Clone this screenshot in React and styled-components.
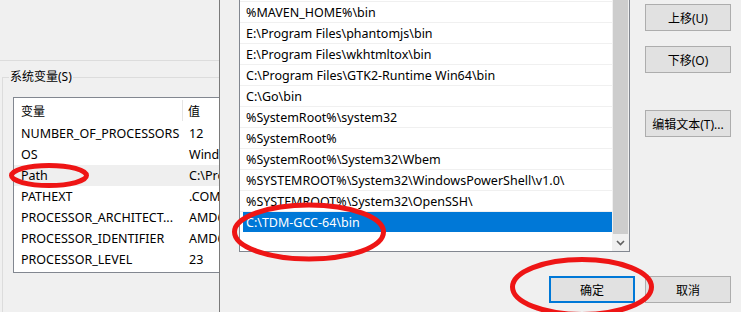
import styled, { createGlobalStyle } from 'styled-components';

const GlobalStyle = createGlobalStyle`
    body {
        margin: 0;
        background: #f0f0f0;
        font-family: "Noto Sans", "Noto Sans CJK SC", sans-serif;
        font-size: 12px;
        color: #000;
    }
`;

const Screen = styled.div`
    position: relative;
    width: 741px;
    height: 312px;
    overflow: hidden;
    display: flex;
    background: #f0f0f0;
`;

/* --- window behind --- */

const BackWindow = styled.div`
    width: 219px;
    flex: none;
    overflow: hidden;
`;

const TopArea = styled.div`
    height: 60px;
    border-bottom: 1px solid #dcdcdc;
`;

const GroupBox = styled.fieldset`
    margin: 8px 0 0 2px;
    padding: 0 0 0 10px;
    min-width: 0;
    width: 260px;
    height: 260px;
    border: 1px solid #dcdcdc;
    border-right: none;
    border-bottom: none;
`;

const GroupLabel = styled.legend`
    margin-left: -4px;
    padding: 0 1px;
    line-height: 16px;
    font-size: 12px;
`;

const VarTable = styled.div`
    margin-top: 12px;
    width: 300px;
    background: #fff;
    border: 1px solid #828790;
    padding-bottom: 2px;
    font-size: 12.5px;
`;

const TableHeader = styled.div`
    display: flex;
    height: 25px;
    align-items: stretch;
    font-size: 12px;
`;

const HeaderCell = styled.div`
    display: flex;
    align-items: center;
    flex: none;
    padding-left: ${(props) => (props.first ? '7px' : '5px')};
    width: ${(props) => (props.first ? '161px' : 'auto')};
    border-right: ${(props) => (props.first ? '1px solid #e5e5e5' : 'none')};
    margin: ${(props) => (props.first ? '2px 0' : '0')};
`;

const VarRow = styled.div`
    display: flex;
    align-items: center;
    height: 21px;
    background: ${(props) => (props.highlighted ? '#efefef' : '#fff')};
    white-space: nowrap;
`;

const VarName = styled.span`
    flex: none;
    width: 163px;
    padding-left: 7px;
    overflow: hidden;
`;

const VarValue = styled.span`
    flex: none;
    padding-left: 5px;
`;

/* --- front dialog --- */

const FrontWindow = styled.div`
    flex: 1;
    border-left: 1px solid #7a7a7a;
    display: flex;
    flex-direction: column;
    padding: 0 10px 0 19px;
`;

const TopRow = styled.div`
    display: flex;
    gap: 15px;
`;

const PathList = styled.div`
    width: 391px;
    height: 252px;
    box-sizing: border-box;
    border: 1px solid #828790;
    border-top: none;
    display: flex;
    background: #fff;
    font-size: 12.5px;
`;

const Items = styled.div`
    flex: 1;
    display: flex;
    flex-direction: column;
    padding-top: 1px;
`;

const ItemRow = styled.div`
    display: flex;
    height: 20px;
    border-top: 1px solid #f0f0f0;
    padding-left: 3px;
`;

const ItemLabel = styled.span`
    flex: 1;
    display: flex;
    align-items: center;
    padding-left: 3px;
    white-space: nowrap;
    background: ${(props) => (props.selected ? '#0078d7' : 'transparent')};
    color: ${(props) => (props.selected ? '#fff' : '#000')};
`;

const ScrollBar = styled.div`
    width: 17px;
    flex: none;
    background: #f0f0f0;
    display: flex;
    flex-direction: column;
`;

const Thumb = styled.div`
    flex: 1;
    margin: 0 1px;
    background: #cdcdcd;
`;

const ArrowBox = styled.div`
    height: 17px;
    display: flex;
    align-items: center;
    justify-content: center;
`;

const ButtonColumn = styled.div`
    width: 86px;
    display: flex;
    flex-direction: column;
    padding-top: 4px;
`;

const Button = styled.button`
    width: 86px;
    height: 27px;
    box-sizing: border-box;
    background: #e1e1e1;
    border: ${(props) => (props.primary ? '2px solid #0078d7' : '1px solid #adadad')};
    font-family: "Noto Sans", "Noto Sans CJK SC", sans-serif;
    font-size: 12px;
    color: #000;
    padding: 0;
    margin-top: ${(props) => props.gap || 0}px;
`;

const BottomRow = styled.div`
    display: flex;
    justify-content: flex-end;
    gap: 10px;
    margin-top: 24px;
`;

const Marks = styled.svg`
    position: absolute;
    left: 0;
    top: 0;
    pointer-events: none;
`;

const vars = [
    ['NUMBER_OF_PROCESSORS', '12'],
    ['OS', 'Windows_NT'],
    ['Path', 'C:\\Program Files\\Common Files'],
    ['PATHEXT', '.COM;.EXE;.BAT;.CMD'],
    ['PROCESSOR_ARCHITECT...', 'AMD64'],
    ['PROCESSOR_IDENTIFIER', 'AMD64 Family 23 Model 113'],
    ['PROCESSOR_LEVEL', '23'],
];

const paths = [
    '%MAVEN_HOME%\\bin',
    'E:\\Program Files\\phantomjs\\bin',
    'E:\\Program Files\\wkhtmltox\\bin',
    'C:\\Program Files\\GTK2-Runtime Win64\\bin',
    'C:\\Go\\bin',
    '%SystemRoot%\\system32',
    '%SystemRoot%',
    '%SystemRoot%\\System32\\Wbem',
    '%SYSTEMROOT%\\System32\\WindowsPowerShell\\v1.0\\',
    '%SYSTEMROOT%\\System32\\OpenSSH\\',
    'C:\\TDM-GCC-64\\bin',
];

function App() {
    return (
        <Screen>
            <GlobalStyle />

            <BackWindow>
                <TopArea />
                <GroupBox>
                    <GroupLabel>系统变量(S)</GroupLabel>
                    <VarTable>
                        <TableHeader>
                            <HeaderCell first>变量</HeaderCell>
                            <HeaderCell>值</HeaderCell>
                        </TableHeader>
                        {vars.map(([name, value]) => (
                            <VarRow key={name} highlighted={name === 'Path'}>
                                <VarName>{name}</VarName>
                                <VarValue>{value}</VarValue>
                            </VarRow>
                        ))}
                    </VarTable>
                </GroupBox>
            </BackWindow>

            <FrontWindow>
                <TopRow>
                    <PathList>
                        <Items>
                            {paths.map((p, i) => (
                                <ItemRow key={p}>
                                    <ItemLabel selected={i === paths.length - 1}>{p}</ItemLabel>
                                </ItemRow>
                            ))}
                        </Items>
                        <ScrollBar>
                            <Thumb />
                            <ArrowBox>
                                <svg width="9" height="6" viewBox="0 0 9 6">
                                    <path d="M1 1 L4.5 4.5 L8 1" fill="none" stroke="#606060" strokeWidth="1.6" />
                                </svg>
                            </ArrowBox>
                        </ScrollBar>
                    </PathList>

                    <ButtonColumn>
                        <Button>上移(U)</Button>
                        <Button gap={15}>下移(O)</Button>
                        <Button gap={37}>编辑文本(T)...</Button>
                    </ButtonColumn>
                </TopRow>

                <BottomRow>
                    <Button primary>确定</Button>
                    <Button>取消</Button>
                </BottomRow>
            </FrontWindow>

            <Marks width="741" height="312" viewBox="0 0 741 312">
                <g fill="none" stroke="#ee1515" strokeWidth="5">
                    <ellipse cx="49" cy="175.5" rx="37.5" ry="10" />
                    <ellipse cx="309" cy="232" rx="74.5" ry="27" />
                    <ellipse cx="582" cy="287" rx="69.5" ry="27.5" />
                </g>
            </Marks>
        </Screen>
    );
}

export default App;
